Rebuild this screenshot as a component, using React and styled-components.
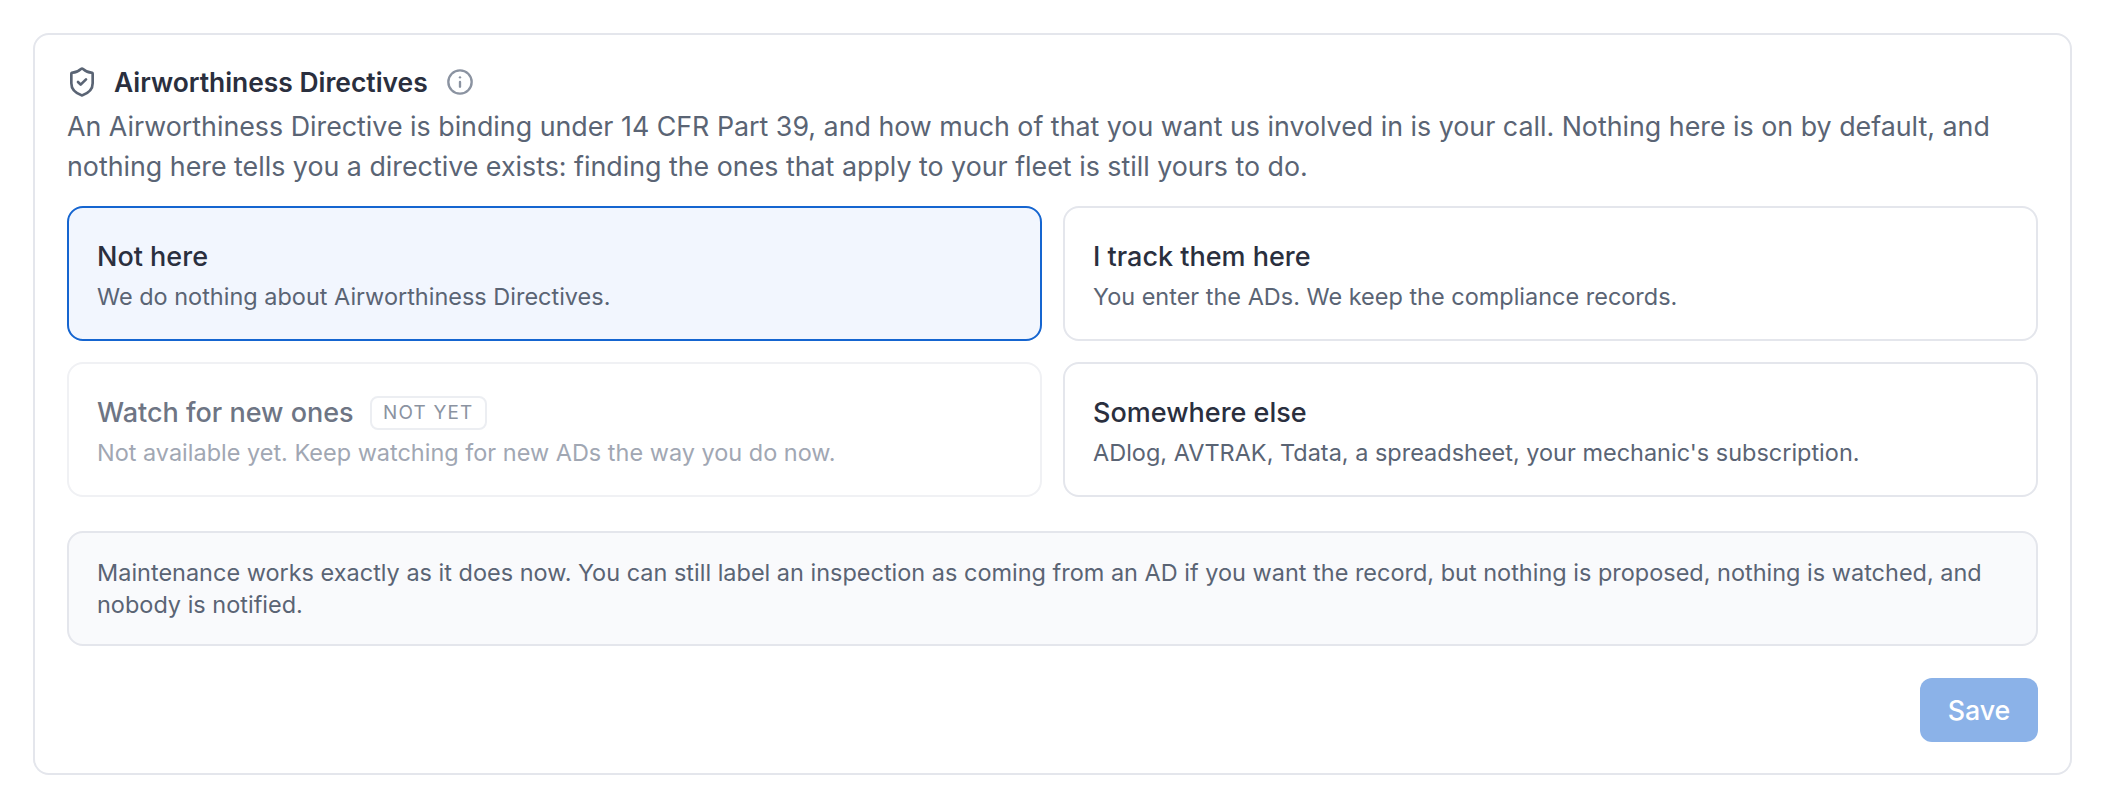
import React from "react";
import styled, { createGlobalStyle } from "styled-components";
import { ShieldCheck, Info } from "lucide-react";

const Global = createGlobalStyle`
  html, body { margin: 0; padding: 0; background: #fff; }
  body { font-family: Inter, "Liberation Sans", sans-serif; -webkit-font-smoothing: antialiased; }
`;

const Page = styled.div`
  padding: 33px;
  box-sizing: border-box;
  width: 2104px;
  height: 808px;
`;

const Card = styled.section`
  box-sizing: border-box;
  width: 2039px;
  height: 742px;
  border: 2px solid #e4e6ec;
  border-radius: 16px;
  padding: 27px 32px 31px;
  display: flex;
  flex-direction: column;
`;

const Header = styled.div`
  display: flex;
  align-items: center;
  height: 40px;
  margin-bottom: 4px;
  color: #2a2f3e;
`;

const ShieldIcon = styled(ShieldCheck)`
  width: 32px;
  height: 32px;
  color: #5a6474;
  margin-left: -1px;
  margin-right: 16px;
  stroke-width: 2;
`;

const Title = styled.h2`
  margin: 0;
  font-size: 26.4px;
  font-weight: 600;
  line-height: 40px;
`;

const InfoIcon = styled(Info)`
  width: 28px;
  height: 28px;
  color: #8b93a1;
  margin-left: 18px;
  stroke-width: 2;
`;

const Description = styled.p`
  margin: 0 0 20px;
  font-size: 26.8px;
  line-height: 40px;
  color: #5a6474;
`;

const Grid = styled.div`
  display: grid;
  grid-template-columns: 1fr 1fr;
  grid-auto-rows: 135px;
  gap: 21px;
`;

const Option = styled.div`
  box-sizing: border-box;
  border-radius: 16px;
  padding: 6px 28px 0;
  display: flex;
  flex-direction: column;
  justify-content: center;
  border: 2px solid ${(p) => (p.$selected ? "#1565d0" : p.$disabled ? "#f0f1f4" : "#e4e6ec")};
  background: ${(p) => (p.$selected ? "#f2f6fe" : "#fff")};
`;

const OptionTitle = styled.div`
  display: flex;
  align-items: center;
  gap: 16px;
  height: 40px;
  font-size: 27px;
  font-weight: 500;
  color: ${(p) => (p.$disabled ? "#6e7584" : "#2a2f3e")};
`;

const Badge = styled.span`
  box-sizing: border-box;
  height: 34px;
  padding: 0 11.5px;
  display: inline-flex;
  align-items: center;
  border: 2px solid #eceef2;
  border-radius: 8px;
  font-size: 18.9px;
  font-weight: 400;
  letter-spacing: 1.2px;
  color: #8b93a1;
`;

const OptionText = styled.div`
  font-size: 23.47px;
  line-height: 40px;
  color: ${(p) => (p.$disabled ? "#a1a7b3" : "#5a6474")};
`;

const Note = styled.div`
  box-sizing: border-box;
  margin-top: 34px;
  height: 115px;
  padding: 0 28px;
  display: flex;
  align-items: center;
  border: 2px solid #e4e6ec;
  border-radius: 16px;
  background: #f9fafc;
  font-size: 23.47px;
  line-height: 32px;
  color: #5a6474;
`;

const Footer = styled.div`
  margin-top: 32px;
  display: flex;
  justify-content: flex-end;
`;

const SaveButton = styled.button`
  width: 118px;
  height: 64px;
  border: 0;
  border-radius: 12px;
  background: #8bb2e8;
  color: #fff;
  font-family: inherit;
  font-size: 26.8px;
  font-weight: 500;
`;

export default function App() {
  return (
    <Page>
      <Global />
      <Card>
        <Header>
          <ShieldIcon />
          <Title>Airworthiness Directives</Title>
          <InfoIcon />
        </Header>
        <Description>
          An Airworthiness Directive is binding under 14 CFR Part 39, and how much of that you want us involved in is your call. Nothing here is on by default, and nothing here tells you a directive exists: finding the ones that apply to your fleet is still yours to do.
        </Description>
        <Grid>
          <Option $selected>
            <OptionTitle>Not here</OptionTitle>
            <OptionText>We do nothing about Airworthiness Directives.</OptionText>
          </Option>
          <Option>
            <OptionTitle>I track them here</OptionTitle>
            <OptionText>You enter the ADs. We keep the compliance records.</OptionText>
          </Option>
          <Option $disabled>
            <OptionTitle $disabled>
              Watch for new ones
              <Badge>NOT YET</Badge>
            </OptionTitle>
            <OptionText $disabled>Not available yet. Keep watching for new ADs the way you do now.</OptionText>
          </Option>
          <Option>
            <OptionTitle>Somewhere else</OptionTitle>
            <OptionText>ADlog, AVTRAK, Tdata, a spreadsheet, your mechanic's subscription.</OptionText>
          </Option>
        </Grid>
        <Note>
          Maintenance works exactly as it does now. You can still label an inspection as coming from an AD if you want the record, but nothing is proposed, nothing is watched, and nobody is notified.
        </Note>
        <Footer>
          <SaveButton>Save</SaveButton>
        </Footer>
      </Card>
    </Page>
  );
}
